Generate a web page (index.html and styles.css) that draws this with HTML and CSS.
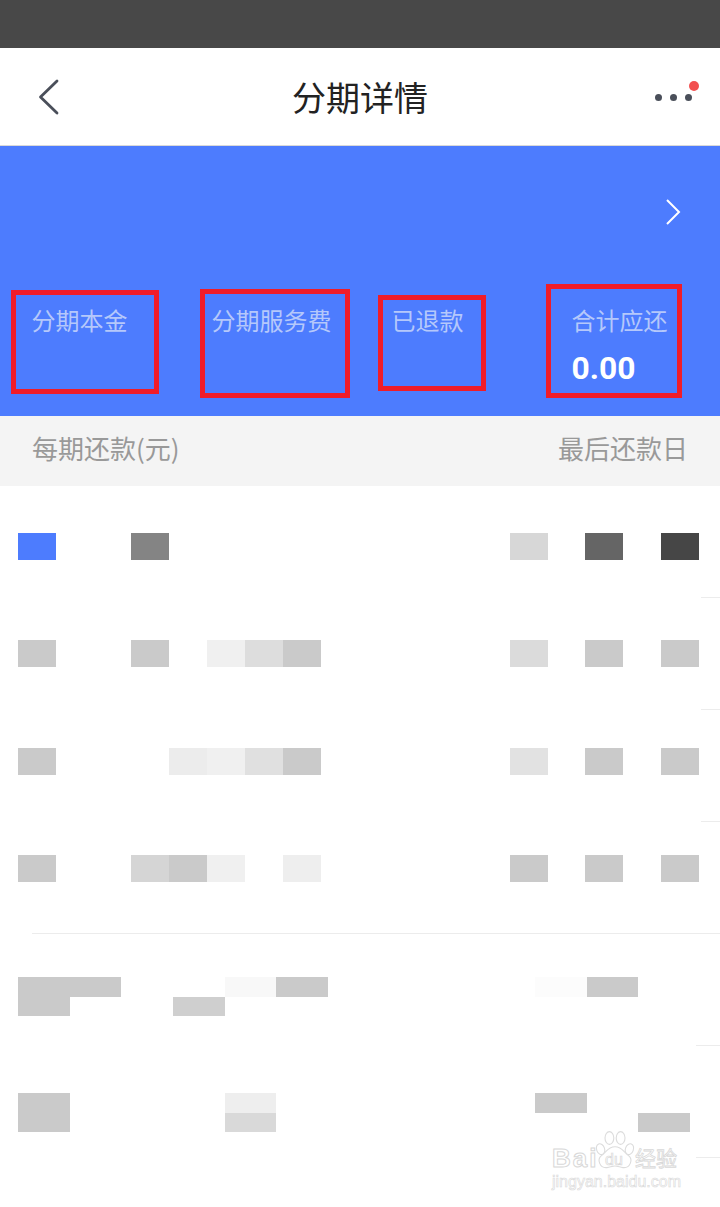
FILE: index.html
```html
<!DOCTYPE html>
<html lang="zh-CN">
<head>
    <meta charset="UTF-8">
    <meta name="viewport" content="width=device-width, initial-scale=1.0">
    <title>分期详情</title>
    <link rel="stylesheet" href="styles.css">
</head>
<body>
    <div class="status-bar"></div>

    <header class="nav">
        <svg class="nav-back" width="24" height="38" viewBox="0 0 24 38">
            <path d="M21 3 L4.5 19 L21 35" fill="none" stroke="#4a4f5a" stroke-width="2.8" stroke-linecap="round" stroke-linejoin="round"/>
        </svg>
        <h1 class="nav-title">分期详情</h1>
        <div class="nav-more">
            <span class="dot"></span>
            <span class="dot"></span>
            <span class="dot"></span>
            <span class="badge"></span>
        </div>
    </header>

    <section class="summary">
        <div class="summary-top">
            <svg width="16" height="26" viewBox="0 0 16 26">
                <path d="M2 1 L14 13 L2 25" fill="none" stroke="#fff" stroke-width="2"/>
            </svg>
        </div>
        <div class="summary-cols">
            <div class="summary-col"><div class="summary-label">分期本金</div></div>
            <div class="summary-col"><div class="summary-label">分期服务费</div></div>
            <div class="summary-col"><div class="summary-label">已退款</div></div>
            <div class="summary-col">
                <div class="summary-label">合计应还</div>
                <div class="summary-value">0.00</div>
            </div>
        </div>
        <!-- red annotation boxes drawn on top of the screenshot -->
        <div class="mark mark-1"></div>
        <div class="mark mark-2"></div>
        <div class="mark mark-3"></div>
        <div class="mark mark-4"></div>
    </section>

    <div class="table-head">
        <span>每期还款(元)</span>
        <span>最后还款日</span>
    </div>

    <section class="list">
        <div class="row row-a line-short">
            <div class="mosaic">
                <i class="col-1 tone-blue"></i>
                <i class="col-4 tone-84"></i>
                <i class="col-14 tone-d7"></i>
                <i class="col-16 tone-65"></i>
                <i class="col-18 tone-46"></i>
            </div>
        </div>
        <div class="row row-b line-short">
            <div class="mosaic">
                <i class="col-1 tone-ca"></i>
                <i class="col-4 tone-ca"></i>
                <i class="col-6 tone-f0"></i>
                <i class="col-7 tone-dd"></i>
                <i class="col-8 tone-ca"></i>
                <i class="col-14 tone-db"></i>
                <i class="col-16 tone-ca"></i>
                <i class="col-18 tone-ca"></i>
            </div>
        </div>
        <div class="row row-c line-short">
            <div class="mosaic">
                <i class="col-1 tone-ca"></i>
                <i class="col-5 tone-ec"></i>
                <i class="col-6 tone-f0"></i>
                <i class="col-7 tone-e0"></i>
                <i class="col-8 tone-ca"></i>
                <i class="col-14 tone-e2"></i>
                <i class="col-16 tone-ca"></i>
                <i class="col-18 tone-ca"></i>
            </div>
        </div>
        <div class="row row-d line-long">
            <div class="mosaic">
                <i class="col-1 tone-ca"></i>
                <i class="col-4 tone-d5"></i>
                <i class="col-5 tone-ca"></i>
                <i class="col-6 tone-f0"></i>
                <i class="col-8 tone-ee"></i>
                <i class="col-14 tone-ca"></i>
                <i class="col-16 tone-ca"></i>
                <i class="col-18 tone-ca"></i>
            </div>
        </div>
        <div class="row row-e line-wide">
            <div class="mosaic-wide">
                <i class="wide-1 top tone-ca"></i>
                <i class="wide-2 top tone-ca"></i>
                <i class="wide-5 top tone-f8"></i>
                <i class="wide-6 top tone-ca"></i>
                <i class="wide-11 top tone-fc"></i>
                <i class="wide-12 top tone-ca"></i>
                <i class="wide-1 bottom tone-ca"></i>
                <i class="wide-4 bottom tone-cf"></i>
            </div>
        </div>
        <div class="row row-f line-wide">
            <div class="mosaic-wide">
                <i class="wide-1 top tone-ca"></i>
                <i class="wide-5 top tone-ee"></i>
                <i class="wide-11 top tone-ca"></i>
                <i class="wide-1 bottom tone-ca"></i>
                <i class="wide-5 bottom tone-d9"></i>
                <i class="wide-13 bottom tone-ca"></i>
            </div>
        </div>
    </section>

    <div class="watermark">
        <div class="wm-logo">
            <span class="wm-bai">Bai</span>
            <span class="wm-paw">
                <svg viewBox="0 0 50 48">
                    <g fill="#fff" stroke="#dcdcdc" stroke-width="1.4">
                        <ellipse cx="7" cy="23" rx="5" ry="7" transform="rotate(-20 7 23)"/>
                        <ellipse cx="18" cy="9" rx="5.5" ry="8"/>
                        <ellipse cx="32" cy="9" rx="5.5" ry="8"/>
                        <ellipse cx="43" cy="23" rx="5" ry="7" transform="rotate(20 43 23)"/>
                        <path d="M25 20 C34 20 36 27 42 31 C48 36 44 47 35 46 C30 45 28 44 25 44 C22 44 20 45 15 46 C6 47 2 36 8 31 C14 27 16 20 25 20 Z"/>
                    </g>
                </svg>
                <span class="wm-du">du</span>
            </span>
            <span class="wm-cn">经验</span>
        </div>
        <div class="wm-url">jingyan.baidu.com</div>
    </div>
</body>
</html>
```

FILE: styles.css
```css
* {
    box-sizing: border-box;
}

body {
    font-family: "Noto Sans CJK SC", "Noto Sans", sans-serif;
    background-color: #fff;
    margin: 0;
    padding: 0;
    position: relative;
    height: 1207px;
    overflow: hidden;
}

.status-bar {
    height: 48px;
    background-color: #484848;
}

.nav {
    height: 98px;
    display: grid;
    grid-template-columns: 1fr auto 1fr;
    align-items: center;
    padding: 0 28px 0 36px;
    background-color: #fff;
    border-bottom: 1px solid #d9d9d9;
}

.nav-title {
    margin: 0 8px 0 0;
    font-size: 34px;
    font-weight: 400;
    color: #222;
    line-height: 98px;
}

.nav-more {
    position: relative;
    display: flex;
    justify-content: flex-end;
    gap: 8px;
}

.dot {
    width: 7px;
    height: 7px;
    border-radius: 50%;
    background-color: #4a4f5a;
}

.badge {
    position: absolute;
    top: -13px;
    right: -7px;
    width: 10px;
    height: 10px;
    border-radius: 50%;
    background-color: #f25050;
}

.summary {
    position: relative;
    height: 270px;
    background-color: #4d7cfe;
}

.summary-top {
    height: 150px;
    display: flex;
    justify-content: flex-end;
    padding: 53px 39px 0 0;
}

.summary-cols {
    display: grid;
    grid-template-columns: repeat(4, 180px);
}

.summary-col {
    padding-left: 31.5px;
}

.summary-label {
    font-size: 24px;
    line-height: 48px;
    color: #b5c8fb;
    white-space: nowrap;
}

.summary-value {
    font-family: "Roboto", sans-serif;
    font-size: 31.8px;
    font-weight: 700;
    line-height: 48px;
    color: #fff;
}

.mark {
    position: absolute;
    border: 5px solid #f01c28;
}

.mark-1 { left: 11px; top: 144px; width: 148px; height: 104px; }
.mark-2 { left: 200px; top: 143px; width: 150px; height: 109px; }
.mark-3 { left: 378px; top: 149px; width: 108px; height: 96px; }
.mark-4 { left: 546px; top: 138px; width: 136px; height: 114px; }

.table-head {
    height: 70px;
    display: flex;
    align-items: center;
    justify-content: space-between;
    padding: 0 32px 8px 32px;
    background-color: #f4f4f4;
    font-size: 26px;
    color: #999;
}

.row {
    position: relative;
    height: 112px;
}

.row::after {
    content: "";
    position: absolute;
    right: 0;
    bottom: 0;
    height: 1px;
    background-color: #ececec;
}

.line-short::after { left: 701px; }
.line-long::after { left: 32px; }
.line-wide::after { left: 696px; }

.row-a { padding-top: 47px; }
.row-b { padding-top: 42px; }
.row-c { padding-top: 38px; }
.row-d { padding-top: 33px; }
.row-e { padding-top: 43px; }
.row-f { padding-top: 47px; }

.mosaic {
    display: grid;
    grid-template-columns: repeat(18, 37.83px);
    grid-auto-rows: 27px;
    margin-left: 18px;
}

.mosaic-wide {
    display: grid;
    grid-template-columns: repeat(13, 51.7px);
    grid-template-rows: 20px 19px;
    margin-left: 18px;
}

.top { grid-row: 1; }
.bottom { grid-row: 2; }

.col-1 { grid-column: 1; }
.col-4 { grid-column: 4; }
.col-5 { grid-column: 5; }
.col-6 { grid-column: 6; }
.col-7 { grid-column: 7; }
.col-8 { grid-column: 8; }
.col-14 { grid-column: 14; }
.col-16 { grid-column: 16; }
.col-18 { grid-column: 18; }

.wide-1 { grid-column: 1; }
.wide-2 { grid-column: 2; }
.wide-4 { grid-column: 4; }
.wide-5 { grid-column: 5; }
.wide-6 { grid-column: 6; }
.wide-11 { grid-column: 11; }
.wide-12 { grid-column: 12; }
.wide-13 { grid-column: 13; }

.tone-blue { background-color: #4d7cfe; }
.tone-46 { background-color: #464646; }
.tone-65 { background-color: #656565; }
.tone-84 { background-color: #848484; }
.tone-ca { background-color: #cacaca; }
.tone-cf { background-color: #cfcfcf; }
.tone-d5 { background-color: #d5d5d5; }
.tone-d7 { background-color: #d7d7d7; }
.tone-d9 { background-color: #d9d9d9; }
.tone-db { background-color: #dbdbdb; }
.tone-dd { background-color: #dddddd; }
.tone-e0 { background-color: #e0e0e0; }
.tone-e2 { background-color: #e2e2e2; }
.tone-ec { background-color: #ececec; }
.tone-ee { background-color: #eeeeee; }
.tone-f0 { background-color: #f0f0f0; }
.tone-f8 { background-color: #f8f8f8; }
.tone-fc { background-color: #fcfcfc; }

.watermark {
    position: absolute;
    left: 552px;
    top: 1130px;
    width: 130px;
}

.wm-logo {
    display: flex;
    align-items: flex-end;
    height: 42px;
}

.wm-bai,
.wm-du,
.wm-cn,
.wm-url {
    color: #fff;
    -webkit-text-stroke: 1px #d8d8d8;
}

.wm-bai {
    font-family: "Liberation Sans", sans-serif;
    font-size: 26px;
    font-weight: 700;
    line-height: 28px;
    letter-spacing: 2px;
    width: 43px;
}

.wm-paw {
    position: relative;
    width: 40px;
    height: 42px;
    flex-shrink: 0;
}

.wm-paw svg {
    position: absolute;
    left: 0;
    top: 0;
    width: 40px;
    height: 40px;
}

.wm-du {
    position: absolute;
    left: 10px;
    bottom: 3px;
    font-family: "Liberation Sans", sans-serif;
    font-size: 16px;
    line-height: 18px;
    -webkit-text-stroke-width: 0.7px;
}

.wm-cn {
    font-size: 21px;
    line-height: 30px;
    white-space: nowrap;
    -webkit-text-stroke-width: 0.8px;
}

.wm-url {
    font-family: "Liberation Sans", sans-serif;
    font-size: 16px;
    line-height: 18px;
    margin-top: 1px;
    white-space: nowrap;
    -webkit-text-stroke-width: 0.6px;
}
```
